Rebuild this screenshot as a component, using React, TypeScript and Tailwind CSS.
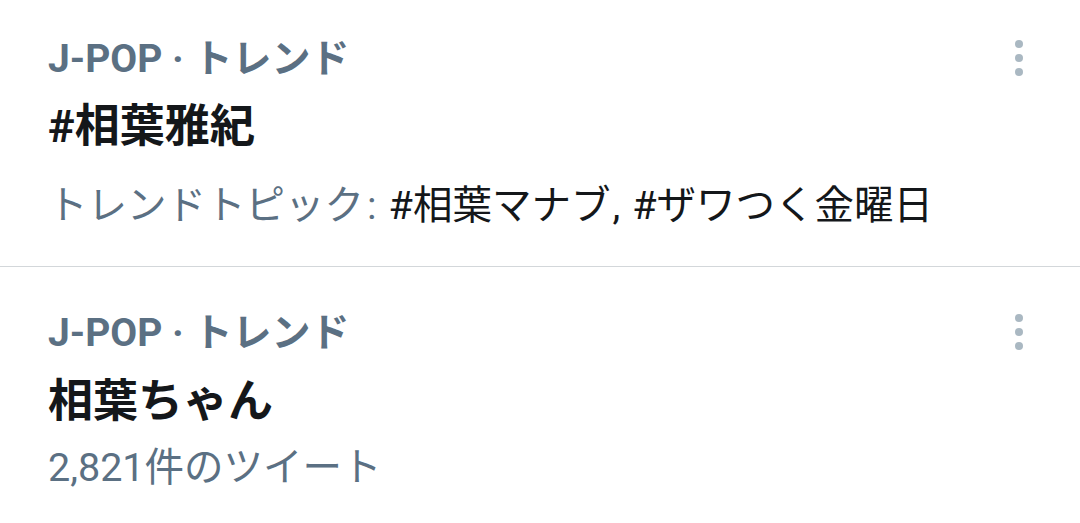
import React from "react";

const FONT = { fontFamily: "Roboto, 'Noto Sans CJK JP', sans-serif" };

function Dots() {
  return (
    <div className="mt-[5px] flex flex-col gap-[6px] pr-[57px]">
      <span className="block h-[8px] w-[8px] rounded-full bg-[#aab8c2]" />
      <span className="block h-[8px] w-[8px] rounded-full bg-[#aab8c2]" />
      <span className="block h-[8px] w-[8px] rounded-full bg-[#aab8c2]" />
    </div>
  );
}

export default function App() {
  return (
    <div className="h-[523px] w-[1080px] overflow-hidden bg-white" style={FONT}>
      <div className="flex items-start justify-between pl-[48px] pt-[35px] pb-[36px]">
        <div className="flex flex-col">
          <div className="text-[39px] leading-[48px] font-bold text-[#5b7083]">J-POP · トレンド</div>
          <div className="mt-[16px] text-[45px] leading-[56px] font-bold text-[#14171a]">#相葉雅紀</div>
          <div className="mt-[27px] flex text-[39.5px] leading-[48px] text-[#5b7083] whitespace-nowrap">
            <span>トレンドトピック</span>
            <span className="ml-[3px]">:</span>
            <span className="ml-[12px] text-[#14171a]">#相葉マナブ</span>
            <span className="ml-[2px] text-[#14171a]">,</span>
            <span className="ml-[12px] text-[#14171a]">#ザワつく金曜日</span>
          </div>
        </div>
        <Dots />
      </div>
      <div className="h-px w-full bg-[#d3d7da]" />
      <div className="flex items-start justify-between pl-[48px] pt-[42px]">
        <div className="flex flex-col">
          <div className="text-[39px] leading-[48px] font-bold text-[#5b7083]">J-POP · トレンド</div>
          <div className="mt-[17px] text-[45px] leading-[56px] font-bold text-[#14171a]">相葉ちゃん</div>
          <div className="mt-[14px] text-[39.5px] leading-[48px] text-[#5b7083]">2,821件のツイート</div>
        </div>
        <Dots />
      </div>
    </div>
  );
}
